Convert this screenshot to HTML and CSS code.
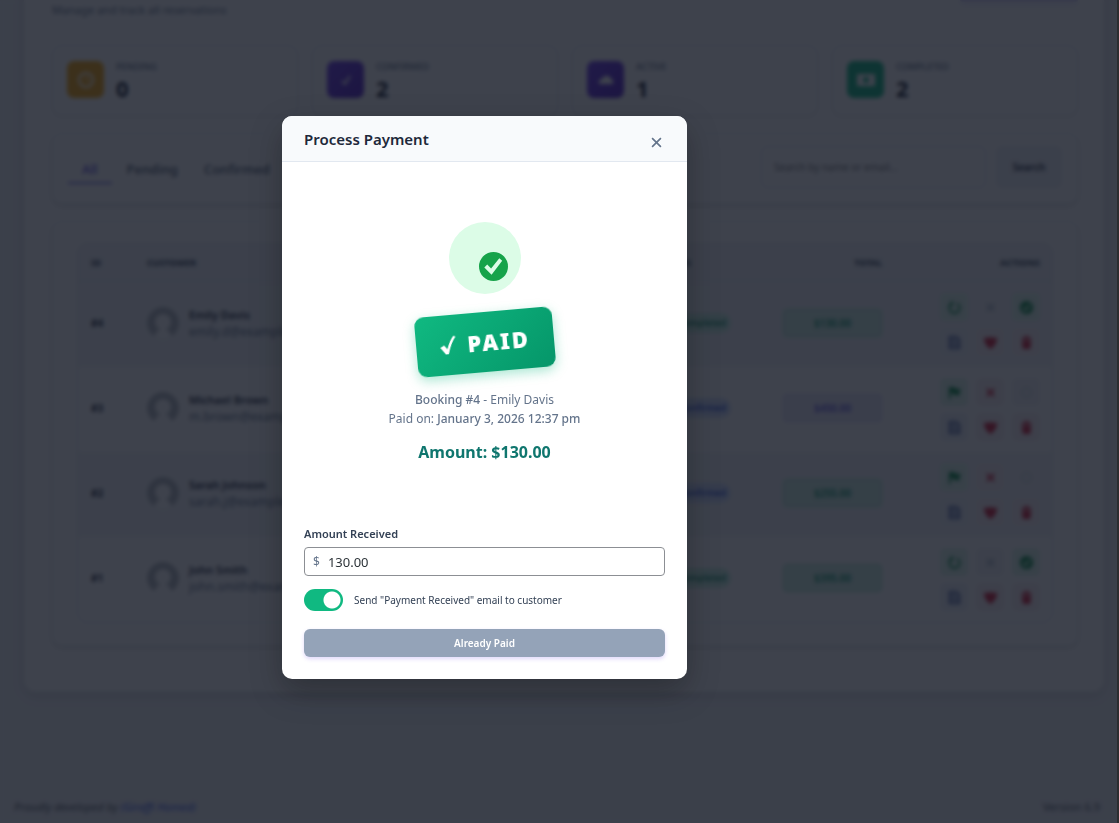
FILE: index.html
```html
<!DOCTYPE html>
<html lang="en">
<head>
<meta charset="utf-8">
<title>Process Payment</title>
<link rel="stylesheet" href="styles.css">
</head>
<body>
<svg class="sprite" aria-hidden="true">
  <symbol id="done" viewBox="0 0 16 16"><circle cx="8" cy="8" r="7" fill="currentColor"/><path d="M4.500 8l2.500 3 4.500-6" fill="none" stroke="#dcfce7" stroke-width="2"/></symbol>
  <symbol id="undo" viewBox="0 0 16 16"><path d="M5.500 3.500a5.500 5.500 0 1 0 5 0M5.500 1v4H2" fill="none" stroke="currentColor" stroke-width="2"/></symbol>
  <symbol id="cross" viewBox="0 0 16 16"><path d="M4 4l8 8M12 4l-8 8" stroke="currentColor" stroke-width="2"/></symbol>
  <symbol id="flag" viewBox="0 0 16 16"><path d="M2 2h6l1 2h6l-2 4 1 3H8L7 9H4v6H2z" fill="currentColor"/></symbol>
  <symbol id="ring" viewBox="0 0 16 16"><circle cx="8" cy="8" r="5" fill="none" stroke="currentColor"/></symbol>
  <symbol id="doc" viewBox="0 0 16 16"><path d="M3 2h7l3 3v9H3zM5 6h5M5 10h6" fill="none" stroke="currentColor" stroke-width="2"/></symbol>
  <symbol id="shield" viewBox="0 0 16 16"><path d="M1 3q5 0 7-1 2 1 7 1 0 8-7 12Q1 11 1 3z" fill="currentColor"/></symbol>
  <symbol id="trash" viewBox="0 0 16 16"><path d="M3 3h3V1h4v2h3v2H3zM3 6h10l-1 9H4z" fill="currentColor"/></symbol>
  <symbol id="person" viewBox="0 0 32 32"><circle cx="16" cy="16" r="16" fill="#b4b8be"/><circle cx="16" cy="15" r="8" fill="#fff"/><path d="M7 32q1-10 9-10t9 10z" fill="#fff"/></symbol>
</svg>

<main class="page">
  <header class="page-head">
    <p class="subtitle">Manage and track all reservations</p>
    <button class="add" aria-label="Add booking"></button>
  </header>

  <section class="stats">
    <div class="stat"><span class="tile amber"><svg viewBox="0 0 20 20"><circle cx="10" cy="10" r="7" fill="none" stroke="#fff" stroke-width="2"/><path d="M10 6v4h3" fill="none" stroke="#fff" stroke-width="1"/></svg></span><div><p class="stat-name">Pending</p><p class="stat-value">0</p></div></div>
    <div class="stat"><span class="tile violet"><svg viewBox="0 0 20 20"><path d="M6 11l3 3 5-8" fill="none" stroke="#fff" stroke-width="2"/></svg></span><div><p class="stat-name">Confirmed</p><p class="stat-value">2</p></div></div>
    <div class="stat"><span class="tile violet"><svg viewBox="0 0 20 20"><path d="M3 14v-4l3-1 2-3h5l2 3 2 1v4z" fill="#fff"/></svg></span><div><p class="stat-name">Active</p><p class="stat-value">1</p></div></div>
    <div class="stat"><span class="tile green"><svg viewBox="0 0 20 20"><path d="M1 4h18v12H1z" fill="#fff"/><circle cx="10" cy="10" r="3" fill="#10b981"/></svg></span><div><p class="stat-name">Completed</p><p class="stat-value">2</p></div></div>
  </section>

  <section class="filters">
    <nav class="tabs"><a class="tab on" href="#">All</a><a class="tab" href="#">Pending</a><a class="tab" href="#">Confirmed</a></nav>
    <form class="search"><input type="text" placeholder="Search by name or email..." aria-label="Search by name or email"><button type="button">Search</button></form>
  </section>

  <section class="list">
    <table>
      <colgroup><col class="c-id"><col><col class="c-status"><col class="c-total"><col class="c-actions"></colgroup>
      <thead><tr><th>ID</th><th>Customer</th><th>Status</th><th class="right">Total</th><th class="right">Actions</th></tr></thead>
      <tbody>
        <tr>
          <td class="num">#4</td>
          <td><div class="who"><svg class="avatar"><use href="#person"/></svg><div><b>Emily Davis</b><span>emily.d@example.com</span></div></div></td>
          <td><span class="badge ok">Completed</span></td>
          <td><span class="total ok">$130.00</span></td>
          <td><div class="acts"><button class="g" aria-label="Reopen"><svg><use href="#undo"/></svg></button><button class="n" aria-label="Cancel"><svg><use href="#cross"/></svg></button><button class="g" aria-label="Paid"><svg><use href="#done"/></svg></button><button class="b" aria-label="Invoice"><svg><use href="#doc"/></svg></button><button class="r" aria-label="Block"><svg><use href="#shield"/></svg></button><button class="r" aria-label="Delete"><svg><use href="#trash"/></svg></button></div></td>
        </tr>
        <tr>
          <td class="num">#3</td>
          <td><div class="who"><svg class="avatar"><use href="#person"/></svg><div><b>Michael Brown</b><span>m.brown@example.com</span></div></div></td>
          <td><span class="badge info">Confirmed</span></td>
          <td><span class="total due">$450.00</span></td>
          <td><div class="acts"><button class="g" aria-label="Complete"><svg><use href="#flag"/></svg></button><button class="r" aria-label="Cancel"><svg><use href="#cross"/></svg></button><button class="n" aria-label="Pay"><svg><use href="#ring"/></svg></button><button class="b" aria-label="Invoice"><svg><use href="#doc"/></svg></button><button class="r" aria-label="Block"><svg><use href="#shield"/></svg></button><button class="r" aria-label="Delete"><svg><use href="#trash"/></svg></button></div></td>
        </tr>
        <tr>
          <td class="num">#2</td>
          <td><div class="who"><svg class="avatar"><use href="#person"/></svg><div><b>Sarah Johnson</b><span>sarah.j@example.com</span></div></div></td>
          <td><span class="badge info">Confirmed</span></td>
          <td><span class="total ok">$255.00</span></td>
          <td><div class="acts"><button class="g" aria-label="Complete"><svg><use href="#flag"/></svg></button><button class="r" aria-label="Cancel"><svg><use href="#cross"/></svg></button><button class="n" aria-label="Pay"><svg><use href="#ring"/></svg></button><button class="b" aria-label="Invoice"><svg><use href="#doc"/></svg></button><button class="r" aria-label="Block"><svg><use href="#shield"/></svg></button><button class="r" aria-label="Delete"><svg><use href="#trash"/></svg></button></div></td>
        </tr>
        <tr>
          <td class="num">#1</td>
          <td><div class="who"><svg class="avatar"><use href="#person"/></svg><div><b>John Smith</b><span>john.smith@example.com</span></div></div></td>
          <td><span class="badge ok">Completed</span></td>
          <td><span class="total ok">$395.00</span></td>
          <td><div class="acts"><button class="g" aria-label="Reopen"><svg><use href="#undo"/></svg></button><button class="n" aria-label="Cancel"><svg><use href="#cross"/></svg></button><button class="g" aria-label="Paid"><svg><use href="#done"/></svg></button><button class="b" aria-label="Invoice"><svg><use href="#doc"/></svg></button><button class="r" aria-label="Block"><svg><use href="#shield"/></svg></button><button class="r" aria-label="Delete"><svg><use href="#trash"/></svg></button></div></td>
        </tr>
      </tbody>
    </table>
  </section>
</main>

<footer class="foot"><span>Proudly developed by <a href="#">(Giraffi Homed)</a></span><span>Version 6.9</span></footer>

<div class="overlay">
  <div class="modal" role="dialog" aria-labelledby="modal-title">
    <header class="modal-head">
      <h2 id="modal-title">Process Payment</h2>
      <button class="close" aria-label="Close"><svg viewBox="0 0 10 10"><path d="M1 1l8 8M9 1L1 9" stroke="currentColor" stroke-width="1.500"/></svg></button>
    </header>
    <div class="modal-body">
      <div class="status">
        <div class="disc"><svg class="disc-icon" viewBox="0 0 30 30"><circle cx="15" cy="15" r="15" fill="#16a34a"/><path d="M5.500 16l3-3 4 4 8.500-10.500 3 2.500-11 14.500z" fill="#dcfce7"/></svg></div>
        <div class="stamp"><svg viewBox="0 0 16 20"><path d="M0 12l4-2 3 4Q10 5 14 1l2 1Q11 8 8 19H5z" fill="#fff"/></svg><span>PAID</span></div>
        <p class="line"><strong>Booking #4</strong> - Emily Davis</p>
        <p class="line">Paid on: <strong>January 3, 2026 12:37 pm</strong></p>
        <p class="amount">Amount: $130.00</p>
      </div>
      <label class="field-label" for="amount">Amount Received</label>
      <div class="field"><span>$</span><input id="amount" type="text" value="130.00"></div>
      <label class="toggle"><input type="checkbox" checked>Send "Payment Received" email to customer</label>
      <button class="submit" disabled>Already Paid</button>
    </div>
  </div>
</div>
</body>
</html>
```

FILE: styles.css
```css
* { box-sizing: border-box; }
html { background: #2c2d30; overflow: hidden; }
body {
  margin: 0 2px 0 0;
  min-height: 100vh;
  display: flex;
  flex-direction: column;
  overflow: hidden;
  background: #f0f2f6;
  color: #1e293b;
  font-family: "Noto Sans", "Open Sans", sans-serif;
  font-size: 12px;
}
p, h2 { margin: 0; }
button, input { font: inherit; color: inherit; }
button { border: 0; padding: 0; }
.sprite { position: absolute; width: 0; height: 0; }

.page {
  margin: -28px 13px 0 24px;
  padding: 28px 26px 45px 28px;
  background: #fff;
  border-radius: 12px;
  box-shadow: 0 4px 12px rgba(0, 0, 0, .12);
}
.page-head { display: flex; justify-content: space-between; height: 45px; }
.subtitle { font-size: 11px; line-height: 20px; color: #64748b; }
.add { width: 118px; height: 2px; border-radius: 0 0 8px 8px; background: #d6d1f6; box-shadow: 0 2px 6px #d6d1f6; }

.stats { display: grid; grid-template-columns: repeat(4, 1fr); gap: 14px; }
.stat {
  display: flex;
  gap: 12px;
  height: 71px;
  padding: 15px 14px;
  border: 1px solid #e6eaf0;
  border-radius: 10px;
  box-shadow: 0 1px 3px rgba(0, 0, 0, .08);
}
.tile { display: grid; place-items: center; width: 37px; height: 37px; border-radius: 7px; }
.tile svg { width: 20px; height: 20px; }
.amber { background: #f5a50b; }
.violet { background: linear-gradient(135deg, #6d3bea, #5420c8); }
.green { background: #10b981; }
.stat-name { font-size: 9px; line-height: 11px; font-weight: 500; text-transform: uppercase; color: #64748b; }
.stat-value { font-size: 22px; line-height: 32px; font-weight: 700; color: #0f172a; }

.filters {
  display: flex;
  justify-content: space-between;
  margin-top: 17px;
  padding: 12px 15px;
  height: 71px;
  border: 1px solid #eceff4;
  border-radius: 10px;
  box-shadow: 0 2px 4px rgba(0, 0, 0, .14);
}
.tabs { display: flex; gap: 4px; height: 38px; }
.tab { padding: 13px 11px 0; font-size: 13px; line-height: 20px; font-weight: 500; color: #475569; text-decoration: none; }
.tab.on { padding: 13px 14px 0; color: #5b4be0; border-bottom: 2px solid #8a80e8; }
.search { display: flex; gap: 10px; }
.search input { width: 225px; height: 42px; padding: 0 12px; border: 1px solid #e2e6ec; border-radius: 6px; background: #fff; font-size: 10px; }
.search button { width: 66px; height: 42px; border-radius: 6px; background: #eff2f7; font-size: 10px; font-weight: 600; }

.list {
  margin-top: 17px;
  margin-bottom: 1px;
  padding: 21px 24px 22px;
  border: 1px solid #eceff4;
  border-radius: 10px;
  box-shadow: 0 2px 4px rgba(0, 0, 0, .14);
}
table { width: 100%; table-layout: fixed; border-spacing: 0; border: 1px solid #e2e6ec; border-radius: 10px; overflow: hidden; }
.c-id { width: 56px; }
.c-status { width: 122px; }
.c-total { width: 126px; }
.c-actions { width: 158px; }
th { height: 38px; padding: 0 12px 0 13px; text-align: left; font-size: 9px; font-weight: 700; text-transform: uppercase; background: #f2f4f8; color: #334155; border-bottom: 1px solid #e5e9ef; }
.right { text-align: right; }
td { height: 85px; padding: 0 12px 3px 13px; }
td:last-child { padding-bottom: 0; }
tbody tr:nth-child(odd) { background: #f4f6f9; }
.num { font-size: 10px; font-weight: 700; }
.who { display: flex; align-items: center; gap: 10px; }
.avatar { width: 32px; height: 32px; border-radius: 50%; }
.who b, .who span { display: block; line-height: 17px; }
.who b { font-size: 11px; font-weight: 600; }
.who span { color: #64748b; }
.badge { display: inline-block; width: 72px; padding: 3px 5px; border-radius: 10px; font-size: 9px; line-height: 14px; font-weight: 600; text-align: right; }
.badge.ok { background: #c9f3e3; color: #0a8f66; }
.badge.info { background: #d3dfff; color: #2b50dd; }
.total { display: block; width: 99px; margin-left: auto; line-height: 26px; border: 1px solid; text-align: center; font-size: 10px; font-weight: 600; border-radius: 4px; }
.total.ok { background: #d1f2e4; color: #059669; border-color: #a4e5cb; }
.total.due { background: #ebe9fb; color: #6155dd; border-color: #d3cff6; }
.acts { display: grid; grid-template-columns: repeat(3, 28px); gap: 7px 8px; justify-content: end; }
.acts button { display: grid; place-items: center; height: 28px; border-radius: 5px; }
.acts svg { width: 15px; height: 15px; }
.acts .g { background: #dff7eb; color: #0d9048; }
.acts .n { background: #f4f5f8; color: #b6bfcc; }
.acts .b { background: #eff2fa; color: #41599c; }
.acts .r { background: #f9f0f3; color: #d2203a; }

.foot { display: flex; justify-content: space-between; margin-top: auto; padding: 0 17px 7px 14px; line-height: 18px; color: #50575e; font-size: 11px; }
.foot span:first-child { font-style: italic; }
.foot a { color: #3858e9; text-decoration: none; }

.overlay {
  position: fixed;
  inset: 0 2px 0 0;
  display: grid;
  place-items: center;
  padding: 0 148px 28px 0;
  background: rgba(14, 19, 31, .8);
  backdrop-filter: blur(2px);
}
.modal { width: 405px; border-radius: 10px; overflow: hidden; background: #fff; box-shadow: 0 12px 32px rgba(0, 0, 0, .28); }
.modal-head { display: flex; align-items: center; justify-content: space-between; height: 46px; padding: 0 22px; background: #f8fafc; border-bottom: 1px solid #e2e8f0; }
.modal-head h2 { font-size: 15px; line-height: 24px; font-weight: 600; }
.close { display: grid; place-items: center; width: 18px; height: 18px; margin-top: 7px; background: none; color: #64748b; }
.close svg { width: 11px; height: 11px; }
.modal-body { padding: 60px 22px 22px; }
.status { display: flex; flex-direction: column; align-items: center; }
.disc { display: grid; width: 72px; height: 72px; padding: 30px 0 0 30px; border-radius: 50%; background: #dcfce7; }
.disc-icon { width: 29px; height: 29px; }
.stamp {
  display: flex;
  align-items: center;
  justify-content: center;
  gap: 11px;
  width: 138px;
  height: 60px;
  margin: 18px 0;
  border-radius: 9px;
  background: linear-gradient(135deg, #10b981, #059669);
  box-shadow: 0 4px 12px rgba(16, 185, 129, .35);
  color: #fff;
  font-size: 22px;
  font-weight: 900;
  letter-spacing: 2px;
  transform: rotate(-5deg);
}
.stamp svg { width: 16px; height: 20px; }
.line { font-size: 12px; line-height: 19px; color: #64748b; }
.line strong { font-weight: 500; }
.amount { margin-top: 14px; font-size: 16px; line-height: 20px; font-weight: 700; color: #0f766e; }
.field-label { display: block; margin-top: 62px; font-size: 11px; line-height: 20px; font-weight: 600; color: #334155; }
.field { display: flex; align-items: center; height: 29px; margin-top: 3px; padding-left: 8px; gap: 8px; border: 1px solid #8c8f94; border-radius: 4px; color: #64748b; }
.field input { flex: 1; min-width: 0; border: 0; padding: 0; outline: 0; background: none; font-size: 13px; color: #2c3338; }
.toggle { display: flex; align-items: center; gap: 11px; margin-top: 13px; font-size: 10px; line-height: 22px; color: #334155; }
.toggle input { appearance: none; width: 39px; height: 22px; margin: 0; border-radius: 11px; background: radial-gradient(circle at 28px 11px, #fff 8px, #10b981 9px); }
.submit { display: block; width: 100%; height: 28px; margin-top: 18px; border-radius: 6px; background: #94a3b8; color: #fff; font-size: 10px; font-weight: 600; box-shadow: 0 2px 4px rgba(99, 60, 237, .2); }
```
